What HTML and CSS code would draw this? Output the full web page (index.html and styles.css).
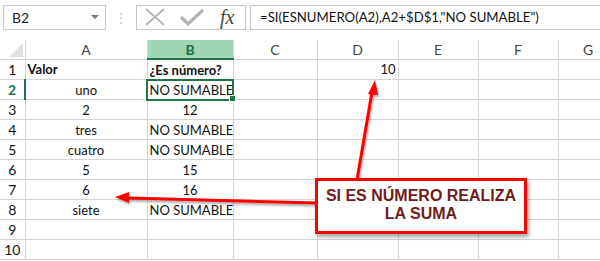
FILE: index.html
```html
<!DOCTYPE html>
<html lang="es">
<head>
    <meta charset="UTF-8">
    <title>Hoja de cálculo - ESNUMERO</title>
    <link rel="stylesheet" href="styles.css">
</head>
<body>

<div id="sheet">
    <div class="formula-bar">
        <div class="name-box">
            <span>B2</span>
            <span class="drop"></span>
        </div>
        <div class="grip">⋮</div>
        <div class="fx-buttons">
            <svg class="btn-icon" width="26" height="22" viewBox="0 0 26 22">
                <path d="M4 3 L22 19 M22 3 L4 19" stroke="#b4b4b4" stroke-width="1.8" fill="none"/>
            </svg>
            <svg class="btn-icon" width="28" height="22" viewBox="0 0 28 22">
                <path d="M3 11 L10 18 L25 4" stroke="#b4b4b4" stroke-width="3.2" fill="none"/>
            </svg>
            <span class="fx">fx</span>
        </div>
        <div class="formula">=SI(ESNUMERO(A2),A2+$D$1,"NO SUMABLE")</div>
    </div>

    <table class="grid">
        <colgroup>
            <col style="width:25px">
            <col style="width:122px">
            <col style="width:86px">
            <col style="width:84px">
            <col style="width:81px">
            <col style="width:80px">
            <col style="width:80px">
            <col style="width:60px">
        </colgroup>
        <tr class="col-heads">
            <th class="corner"><span class="tri"></span></th>
            <th>A</th><th class="sel-col">B</th><th>C</th><th>D</th><th>E</th><th>F</th><th>G</th>
        </tr>
        <tr><th>1</th><td class="b">Valor</td><td class="b left">¿Es número?</td><td></td><td class="num">10</td><td></td><td></td><td></td></tr>
        <tr><th class="sel-row">2</th><td class="c">uno</td><td class="active-cell">NO SUMABLE<span class="handle"></span></td><td></td><td></td><td></td><td></td><td></td></tr>
        <tr><th>3</th><td class="c">2</td><td class="c">12</td><td></td><td></td><td></td><td></td><td></td></tr>
        <tr><th>4</th><td class="c">tres</td><td>NO SUMABLE</td><td></td><td></td><td></td><td></td><td></td></tr>
        <tr><th>5</th><td class="c">cuatro</td><td>NO SUMABLE</td><td></td><td></td><td></td><td></td><td></td></tr>
        <tr><th>6</th><td class="c">5</td><td class="c">15</td><td></td><td></td><td></td><td></td><td></td></tr>
        <tr><th>7</th><td class="c">6</td><td class="c">16</td><td></td><td></td><td></td><td></td><td></td></tr>
        <tr><th>8</th><td class="c">siete</td><td>NO SUMABLE</td><td></td><td></td><td></td><td></td><td></td></tr>
        <tr><th>9</th><td></td><td></td><td></td><td></td><td></td><td></td><td></td></tr>
        <tr><th>10</th><td></td><td></td><td></td><td></td><td></td><td></td><td></td></tr>
    </table>

    <!-- callout arrows -->
    <svg class="arrows" width="600" height="261" viewBox="0 0 600 261">
        <defs>
            <filter id="shade" x="-10%" y="-10%" width="120%" height="130%">
                <feDropShadow dx="1" dy="2" stdDeviation="1.2" flood-color="#000" flood-opacity="0.35"/>
            </filter>
        </defs>
        <g filter="url(#shade)" fill="#ff0000" stroke="#ff0000">
            <line x1="357" y1="180" x2="372" y2="92" stroke-width="3"/>
            <polygon points="375,80 368,94 378,95" stroke="none"/>
            <line x1="318" y1="203" x2="128" y2="198" stroke-width="3"/>
            <polygon points="115,197 129,192 129,203" stroke="none"/>
        </g>
    </svg>

    <div class="callout">SI ES NÚMERO REALIZA<br>LA SUMA</div>
</div>

</body>
</html>
```

FILE: styles.css
```css
:root {
    --excel-green: #217346;
    --head-green: #a0d5b5;
    --grid: #d4d4d4;
    --red: #ff0000;
}
body {
    margin: 0;
    background: white;
    font-family: Lato, 'Open Sans', sans-serif;
    overflow: hidden;
}
#sheet {
    position: relative;
    width: 600px;
    height: 261px;
    overflow: hidden;
}

/* Formula bar */
.formula-bar { display: flex; align-items: center; height: 40px; padding: 0 0 0 3px; box-sizing: border-box; padding-bottom: 6px; }
.name-box {
    width: 103px; height: 25px; box-sizing: border-box;
    border: 1px solid #c6c6c6; display: flex; align-items: center; justify-content: space-between;
    padding: 0 6px 0 8px; font-size: 14px; color: #222;
}
.drop { width: 0; height: 0; border-left: 4px solid transparent; border-right: 4px solid transparent; border-top: 4px solid #777; }
.grip { width: 30px; text-align: center; color: #c6c6c6; font-size: 14px; }
.fx-buttons {
    width: 110px; height: 25px; box-sizing: border-box; border: 1px solid #c6c6c6;
    display: flex; align-items: center; gap: 10px; padding-left: 5px;
}
.btn-icon { display: block; }
.fx { font-family: 'Liberation Serif', serif; font-style: italic; font-size: 20px; color: #444; margin-left: 4px; }
.formula {
    flex: 1; height: 25px; box-sizing: border-box; margin-left: 4px;
    border: 1px solid #c6c6c6; border-right: none;
    display: flex; align-items: center; padding-left: 9px;
    font-size: 13.2px; color: #111;
}

/* Grid */
.grid { border-collapse: collapse; table-layout: fixed; width: 618px; font-size: 13px; }
.grid th, .grid td {
    height: 19px; padding: 0 2px; border: 1px solid var(--grid);
    white-space: nowrap; overflow: visible; color: #111; font-weight: normal;
}
.grid tr:first-child th, .grid tr:first-child td { border-top: none; }
.grid th:first-child { border-left: none; }
.col-heads th { color: #444; font-size: 14px; height: 18px; background: white; }
.col-heads .corner { position: relative; }
.tri { position: absolute; right: 2px; bottom: 2px; width: 0; height: 0;
       border-left: 14px solid transparent; border-bottom: 14px solid #dfdfdf; }
.col-heads .sel-col { background: var(--head-green); color: var(--excel-green); font-weight: bold; border-bottom: 2px solid var(--excel-green); }
tr th { color: #4a6a8a; text-align: center; padding: 0; font-size: 14px; }
th.sel-row { color: var(--excel-green); font-weight: bold; border-right: 2px solid var(--excel-green); }

.b { font-weight: bold !important; }
.c { text-align: center; }
.num { text-align: right; }
.left { text-align: left; }

.active-cell { position: relative; outline: 2px solid var(--excel-green); outline-offset: -1px; }
.handle { position: absolute; right: -3px; bottom: -3px; width: 5px; height: 5px;
          background: var(--excel-green); border: 1px solid white; }

/* Annotation */
.arrows { position: absolute; left: 0; top: 0; pointer-events: none; }
.callout {
    position: absolute; left: 315px; top: 178px; width: 212px; height: 56px; box-sizing: border-box;
    border: 3px solid var(--red); background: white;
    box-shadow: 2px 3px 4px rgba(0,0,0,0.35);
    font-family: 'Liberation Sans', Arial, sans-serif; font-weight: bold; font-size: 16px;
    color: #701c1c; text-align: center; line-height: 18px; padding-top: 6px;
}
```
